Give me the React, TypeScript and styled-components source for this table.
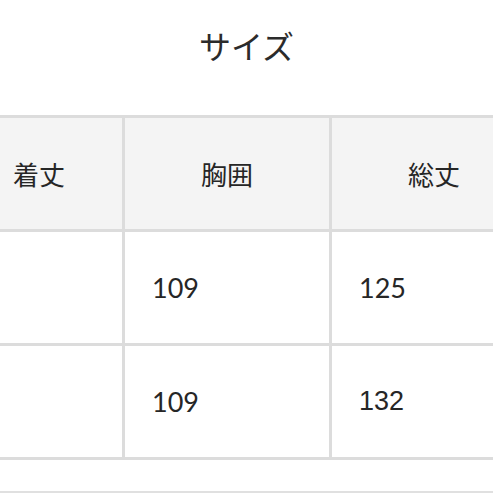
import React from "react";
import styled, { createGlobalStyle } from "styled-components";

const GlobalStyle = createGlobalStyle`
    body {
        margin: 0;
        background: #ffffff;
        overflow: hidden;
        font-family: "Noto Sans CJK JP", "Noto Sans", sans-serif;
        color: #2b2b2b;
    }
`;

const Page = styled.div`
    width: 493px;
    height: 493px;
    overflow: hidden;
`;

const Title = styled.h2`
    margin: 0;
    padding-top: 29px;
    height: 86px;
    font-size: 32px;
    line-height: 32px;
    font-weight: 400;
    text-align: center;
    color: #2b2b2b;
    font-family: "Noto Sans CJK JP", sans-serif;
`;

const Table = styled.div`
    display: grid;
    grid-template-columns: 122px 204px 204px;
    grid-auto-rows: 111px;
    gap: 3px;
    padding: 3px 0;
    background: #dcdcdc;
    width: 536px;
`;

const Cell = styled.div<{ $head?: boolean; $align: "left" | "center"; $pad: number; $font?: string }>`
    display: flex;
    align-items: center;
    justify-content: ${p => (p.$align === "center" ? "center" : "flex-start")};
    padding-left: ${p => p.$pad}px;
    background: ${p => (p.$head ? "#f4f4f4" : "#ffffff")};
    font-size: ${p => (p.$head ? 26 : 27)}px;
    font-family: ${p => p.$font || '"Noto Sans CJK JP", sans-serif'};
    color: #262626;
`;

const Divider = styled.div`
    margin-top: 31px;
    height: 2px;
    background: #e0e0e0;
    width: 100%;
`;

const headers = ["着丈", "胸囲", "総丈"];

const rows = [
    ["", "109", "125"],
    ["", "109", "132"]
];

const App: React.FC = () => {
    return (
        <Page>
            <GlobalStyle />
            <Title>サイズ</Title>
            <Table>
                {headers.map((h, i) => (
                    <Cell key={h} $head $align={i === 0 ? "left" : "center"} $pad={i === 0 ? 13 : 0}>
                        {h}
                    </Cell>
                ))}
                {rows.map((r, ri) =>
                    r.map((v, ci) => (
                        <Cell
                            key={ri + "-" + ci}
                            $align="left"
                            $pad={ci === 0 ? 14 : 27}
                            $font={v === "132" ? '"Liberation Sans", sans-serif' : "Lato, sans-serif"}
                        >
                            {v}
                        </Cell>
                    ))
                )}
            </Table>
            <Divider />
        </Page>
    );
};

export default App;
